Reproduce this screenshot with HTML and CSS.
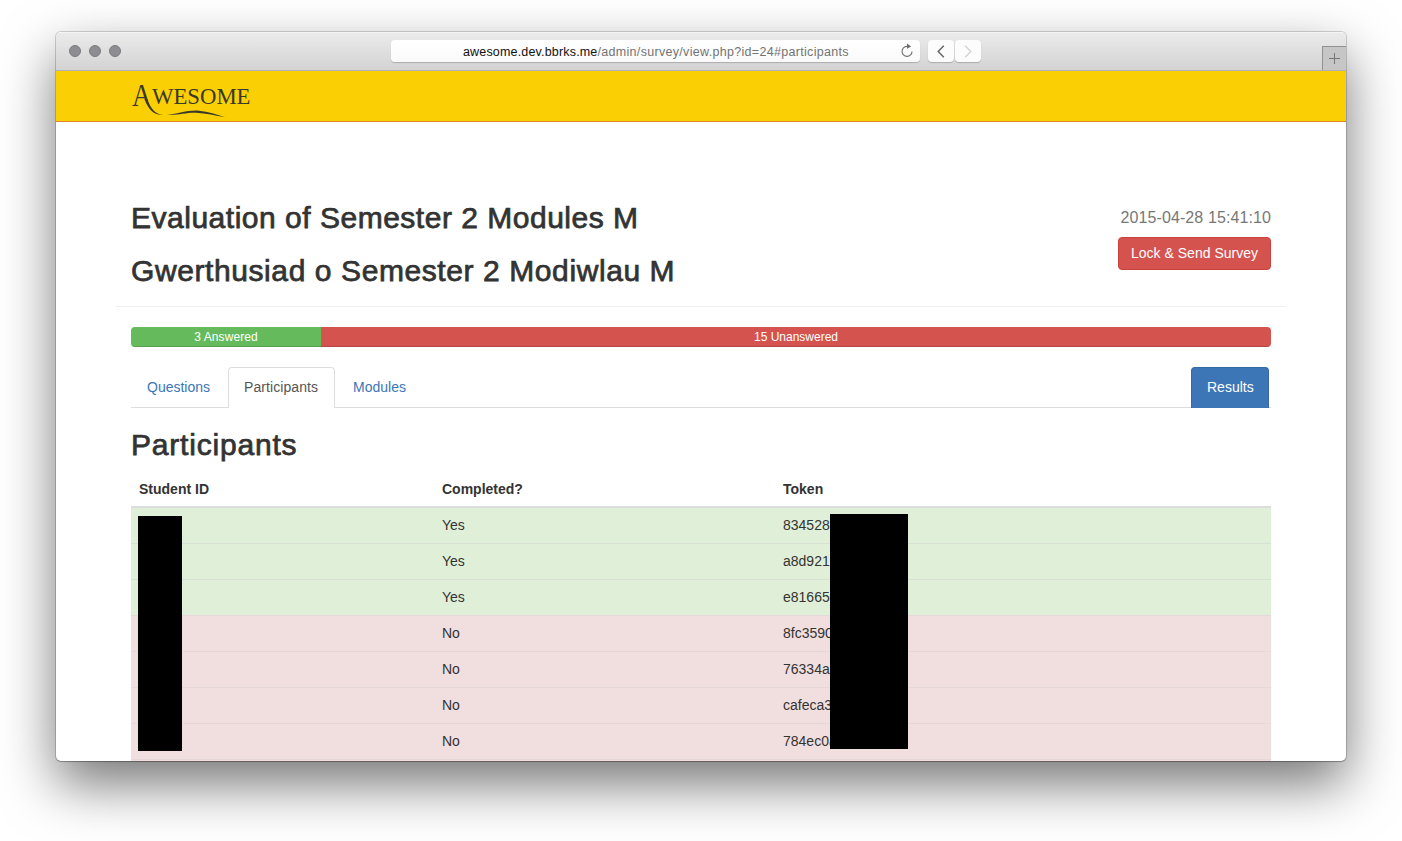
FILE: index.html
```html
<!DOCTYPE html>
<html lang="en">
<head>
<meta charset="utf-8">
<title>Awesome</title>
<link rel="stylesheet" href="styles.css">
</head>
<body>
<div class="window">
  <div class="toolbar">
    <div class="lights"><i></i><i></i><i></i></div>
    <div class="address">
      <div class="url"><b>awesome.dev.bbrks.me</b><span>/admin/survey/view.php?id=24#participants</span></div>
      <svg class="reload" width="14" height="16" viewBox="0 0 14 16"><path d="M7.6 3.4H7A5 5 0 1 0 12 8.4" fill="none" stroke="#6c6c6c" stroke-width="1.1"/><path d="M7 .6v5.2l4.2-2.4z" fill="#6c6c6c"/></svg>
    </div>
    <div class="nav-button"><svg width="8" height="13" viewBox="0 0 8 13"><path d="M6.8.8 1.2 6.5l5.6 5.7" fill="none" stroke="#666" stroke-width="1.5"/></svg></div>
    <div class="nav-button next"><svg width="8" height="13" viewBox="0 0 8 13"><path d="M1.2.8 6.8 6.5 1.2 12.2" fill="none" stroke="#d2d2d2" stroke-width="1.3"/></svg></div>
    <div class="new-tab"><svg width="11" height="11" viewBox="0 0 11 11"><path d="M5.5 0v11M0 5.5h11" stroke="#777" fill="none"/></svg></div>
  </div>
  <div class="navbar">
    <svg class="logo" width="150" height="40" viewBox="0 0 150 40">
      <clipPath id="cap-clip"><path d="M0 0H24V23H12V40H0Z"/></clipPath>
      <text class="logo-cap" x="3" y="28" textLength="19.5" lengthAdjust="spacingAndGlyphs" clip-path="url(#cap-clip)">A</text>
      <text class="logo-rest" x="23" y="26" textLength="98.500" lengthAdjust="spacingAndGlyphs">WESOME</text>
      <path d="M18.300 21C21.500 29.500 25 36 34 36.800C25 37.500 19.500 32 15.500 21Z" fill="#39382c"/>
      <path d="M38 36.700C50 36 58 32 70 32.700C79 33.500 88 36.800 96 39C87 37.800 77 35 67 34.700C56 34.500 49 37.500 38 36.700Z" fill="#39382c"/>
    </svg>
  </div>
  <div class="container">
    <div class="page-header">
      <div class="titles">
        <h2 class="title-en">Evaluation of Semester 2 Modules M</h2>
        <h2 class="title-cy">Gwerthusiad o Semester 2 Modiwlau M</h2>
      </div>
      <div class="actions">
        <div class="date">2015-04-28 15:41:10</div>
        <div class="lock"><span>Lock &amp; Send Survey</span></div>
      </div>
    </div>
    <div class="progress"><div class="answered">3 Answered</div><div class="unanswered">15 Unanswered</div></div>
    <div class="tabs">
      <div class="tab tab-questions">Questions</div>
      <div class="tab active">Participants</div>
      <div class="tab tab-modules">Modules</div>
      <div class="tab results">Results</div>
    </div>
    <h2 class="section-title">Participants</h2>
    <div class="table-wrap">
      <table>
        <colgroup><col class="c1"><col class="c2"><col></colgroup>
        <thead><tr><th>Student ID</th><th>Completed?</th><th>Token</th></tr></thead>
        <tbody>
          <tr class="yes"><td></td><td>Yes</td><td>834528</td></tr>
          <tr class="yes"><td></td><td>Yes</td><td>a8d921</td></tr>
          <tr class="yes"><td></td><td>Yes</td><td>e81665</td></tr>
          <tr class="no"><td></td><td>No</td><td>8fc3590</td></tr>
          <tr class="no"><td></td><td>No</td><td>76334a</td></tr>
          <tr class="no"><td></td><td>No</td><td>cafeca3</td></tr>
          <tr class="no"><td></td><td>No</td><td>784ec0a</td></tr>
          <tr class="no"><td></td><td></td><td></td></tr>
        </tbody>
      </table>
      <div class="mask mask-id"></div>
      <div class="mask mask-token"></div>
    </div>
  </div>
</div>
</body>
</html>
```
FILE: styles.css
```css
* { box-sizing: border-box; }
body {
  margin: 0;
  padding: 32px 56px 0;
  height: 841px;
  overflow: hidden;
  background: #fff;
  color: #333;
  font: 14px/20px "Liberation Sans", Arial, sans-serif;
}
.window {
  height: 729px;
  overflow: hidden;
  background: #fff;
  border-radius: 5px;
  box-shadow: 0 0 0 1px rgba(0,0,0,.16), 0 1px 1px rgba(0,0,0,.2), 0 23px 54px rgba(0,0,0,.54);
}
.toolbar {
  display: flex;
  align-items: flex-start;
  height: 39px;
  background: linear-gradient(#ebebeb, #d3d3d3);
  border-top: 1px solid #f5f5f5;
  border-bottom: 1px solid #b1b1b1;
}
.lights { display: flex; gap: 8px; width: 335px; padding: 12px 0 0 13px; }
.lights i { width: 12px; height: 12px; border-radius: 50%; background: #8e8d92; border: 1px solid #7b7a7e; }
.address {
  display: flex;
  justify-content: space-between;
  width: 529px;
  height: 22px;
  margin-top: 7px;
  padding: 0 6px 0 72px;
  border-radius: 4px;
  background: linear-gradient(#fff, #fafafa);
  box-shadow: 0 1px 1px rgba(0,0,0,.2);
}
.url { font-size: 12.5px; line-height: 24px; white-space: nowrap; color: #737373; letter-spacing: .31px; }
.url b { font-weight: 400; color: #111; letter-spacing: .17px; }
.reload { margin: 3px 0 0; }
.nav-button {
  display: flex;
  align-items: center;
  justify-content: center;
  width: 26px;
  height: 22px;
  margin: 7px 0 0 8px;
  border-radius: 4px;
  background: #fcfcfc;
  box-shadow: 0 1px 1px rgba(0,0,0,.2);
}
.nav-button.next { margin-left: 1px; }
.new-tab {
  width: 24px;
  height: 24px;
  margin: 13px 0 0 auto;
  padding: 6px 0 0 6px;
  line-height: 0;
  background: #c6c6c6;
  border: 1px solid #929292;
  border-width: 1px 0 0 1px;
}
.navbar { height: 51px; padding: 7px 0 0 73px; background: #fad005; border-bottom: 1px solid #e18424; }
.logo { display: block; font-family: "Liberation Serif", serif; fill: #39382c; }
.logo-cap { font-size: 32px; }
.logo-rest { font-size: 24px; }
.container { padding: 77px 75px 0; }
.page-header {
  display: flex;
  justify-content: space-between;
  height: 108px;
  margin: 0 -15px 20px;
  padding: 0 15px;
  border-bottom: 1px solid #eee;
}
h2 { margin: 0; font-size: 30px; line-height: 33px; font-weight: 400; -webkit-text-stroke: .75px #333; white-space: nowrap; }
.title-en { margin: 2px 0 20px; letter-spacing: .51px; }
.title-cy { letter-spacing: .59px; }
.actions { display: flex; flex-direction: column; align-items: flex-end; }
.date { margin: 9px 0 9px; font-size: 16px; color: #777; letter-spacing: .1px; }
.lock {
  width: 153px;
  height: 33px;
  border: 1px solid #c9403c;
  border-radius: 4px;
  background: #d4534f;
  color: #fff;
  line-height: 30px;
  text-align: center;
  letter-spacing: .02px;
}
.progress { display: flex; height: 20px; margin-bottom: 20px; overflow: hidden; border-radius: 4px; color: #fff; font-size: 12px; text-align: center; }
.progress div { box-shadow: inset 0 -1px 0 rgba(0,0,0,.15); }
.answered { width: 190px; background: #65bb5c; letter-spacing: .1px; }
.unanswered { flex: 1; background: #d4534f; }
.tabs { display: flex; height: 41px; border-bottom: 1px solid #ddd; padding-right: 2px; color: #3b76b8; }
.tab { height: 41px; padding: 0 15px; line-height: 41px; border: 0 solid transparent; border-width: 0 1px; white-space: nowrap; }
.tab-questions { width: 97px; }
.active { width: 107px; border: 1px solid #ddd; border-bottom: 0; border-radius: 4px 4px 0 0; background: #fff; color: #555; line-height: 39px; letter-spacing: .08px; }
.tab-modules { margin-left: 2px; }
.results { width: 78px; margin-left: auto; border: 1px solid #356aa3; border-bottom: 0; border-radius: 4px 4px 0 0; background: #3d76b7; color: #fff; line-height: 39px; }
.section-title { margin: 20px 0 11px; letter-spacing: .8px; }
.table-wrap { position: relative; }
table { width: 100%; table-layout: fixed; border-spacing: 0; border-collapse: separate; }
.c1 { width: 303px; }
.c2 { width: 341px; }
th { height: 36px; padding: 0 8px; text-align: left; border-bottom: 2px solid #ddd; }
td { height: 36px; padding: 0 8px 2px; border-top: 1px solid #ddd; }
tbody tr:first-child td { height: 35px; border-top: 0; }
.yes { background: #e0f0d8; }
.no { background: #f1dede; }
.yes td { border-color: #d8dfd4; }
.no td { border-color: #e6d7d8; }
.mask { position: absolute; height: 235px; background: #000; }
.mask-id { left: 7px; top: 44px; width: 44px; }
.mask-token { left: 699px; top: 42px; width: 78px; }
```
